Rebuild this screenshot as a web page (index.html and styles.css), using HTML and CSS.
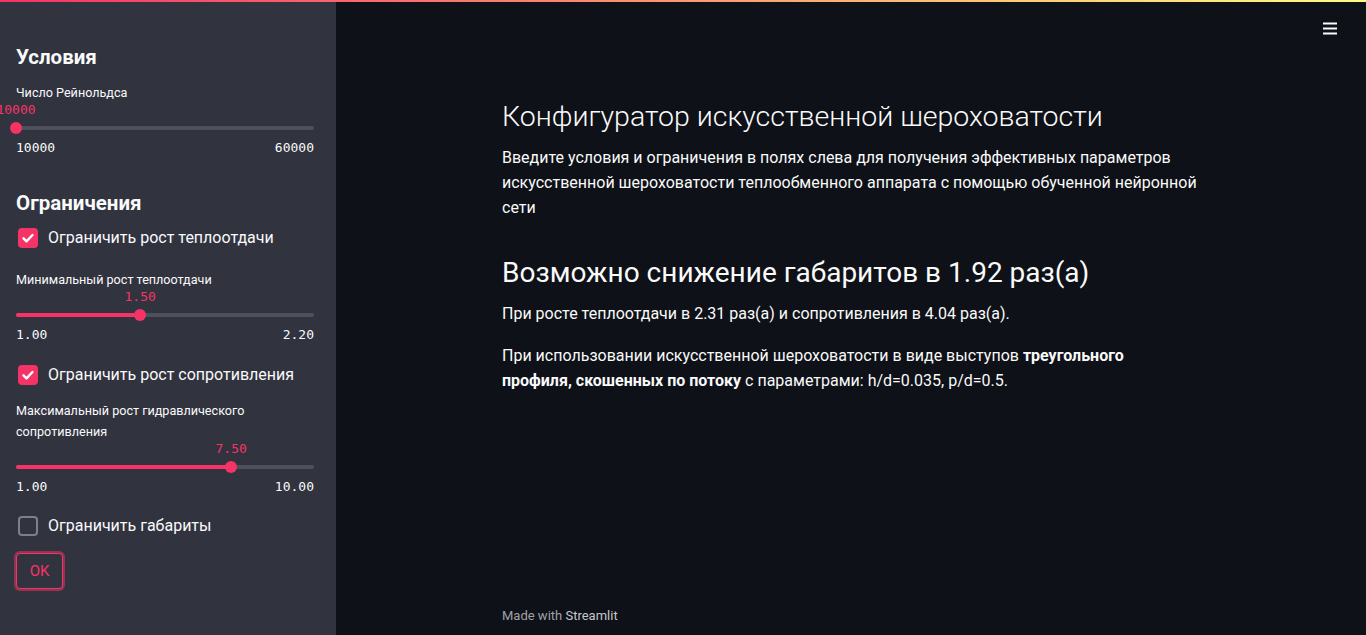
FILE: index.html
```html
<!DOCTYPE html>
<html lang="ru">
<head>
<meta charset="utf-8">
<title>Конфигуратор</title>
<link rel="stylesheet" href="styles.css">
</head>
<body>
<div class="decoration"></div>
<div class="app">
  <aside class="sidebar">
    <h2 class="side-h">Условия</h2>
    <div class="slider s1">
      <div class="s-label">Число Рейнольдса</div>
      <div class="s-body">
        <div class="s-track"><div class="s-fill" style="width:0%"></div>
          <div class="s-thumb" style="left:0%"><span class="s-value">10000</span></div>
        </div>
      </div>
      <div class="s-minmax"><span>10000</span><span>60000</span></div>
    </div>

    <h2 class="side-h side-h2">Ограничения</h2>
    <label class="check c1"><span class="box on"><svg viewBox="0 0 20 20" width="20" height="20"><path d="M5.5 10.3l3 3 6-6.3" fill="none" stroke="#fff" stroke-width="2.4" stroke-linecap="round" stroke-linejoin="round"/></svg></span>Ограничить рост теплоотдачи</label>
    <div class="slider s2">
      <div class="s-label">Минимальный рост теплоотдачи</div>
      <div class="s-body">
        <div class="s-track"><div class="s-fill" style="width:41.67%"></div>
          <div class="s-thumb" style="left:41.67%"><span class="s-value">1.50</span></div>
        </div>
      </div>
      <div class="s-minmax"><span>1.00</span><span>2.20</span></div>
    </div>

    <label class="check c2"><span class="box on"><svg viewBox="0 0 20 20" width="20" height="20"><path d="M5.5 10.3l3 3 6-6.3" fill="none" stroke="#fff" stroke-width="2.4" stroke-linecap="round" stroke-linejoin="round"/></svg></span>Ограничить рост сопротивления</label>
    <div class="slider s3">
      <div class="s-label">Максимальный рост гидравлического сопротивления</div>
      <div class="s-body">
        <div class="s-track"><div class="s-fill" style="width:72.22%"></div>
          <div class="s-thumb" style="left:72.22%"><span class="s-value">7.50</span></div>
        </div>
      </div>
      <div class="s-minmax"><span>1.00</span><span>10.00</span></div>
    </div>

    <label class="check c3"><span class="box"></span>Ограничить габариты</label>
    <button class="btn">OK</button>
  </aside>

  <main class="main">
    <button class="menu" aria-label="menu"><svg width="16" height="14" viewBox="0 0 16 14"><rect x="1" y="1.5" width="14" height="2" fill="#fafafa"/><rect x="1" y="6.5" width="14" height="2" fill="#fafafa"/><rect x="1" y="11.5" width="14" height="2" fill="#fafafa"/></svg></button>
    <div class="block">
      <h1 class="title">Конфигуратор искусственной шероховатости</h1>
      <p class="text">Введите условия и ограничения в полях слева для получения эффективных параметров искусственной шероховатости теплообменного аппарата с помощью обученной нейронной сети</p>
      <h2 class="result">Возможно снижение габаритов в 1.92 раз(а)</h2>
      <p class="text">При росте теплоотдачи в 2.31 раз(а) и сопротивления в 4.04 раз(а).</p>
      <p class="text">При использовании искусственной шероховатости в виде выступов <b>треугольного<br>профиля, скошенных по потоку</b> с параметрами: h/d=0.035, p/d=0.5.</p>
    </div>
    <footer class="footer">Made with <span>Streamlit</span></footer>
  </main>
</div>
</body>
</html>
```

FILE: styles.css
```css
* { box-sizing: border-box; }
html, body { margin: 0; padding: 0; height: 100%; }
body {
  background: #0e1117;
  color: #fafafa;
  font-family: Roboto, "Noto Sans", sans-serif;
  overflow: hidden;
}
.decoration {
  position: fixed;
  top: 0; left: 0; right: 0;
  height: 2px;
  background: linear-gradient(90deg, #f63366, #fffd80);
  z-index: 5;
}
.app { display: flex; height: 635px; }
.sidebar {
  width: 336px;
  flex: none;
  background: #31333f;
  padding: 44px 22px 0 16px;
}
.side-h {
  margin: 0;
  font-size: 20.5px;
  font-weight: 700;
  line-height: 26px;
  color: #fafafa;
}
.side-h2 { margin-top: 34px; }
.s-label {
  font-size: 12.6px;
  line-height: 21px;
  color: #fafafa;
}
.s-body { height: 27px; padding-top: 23px; }
.s-track {
  position: relative;
  height: 4px;
  border-radius: 2px;
  background: #4e505c;
}
.s-fill { height: 4px; border-radius: 2px; background: #f63366; }
.s-thumb {
  position: absolute;
  top: -4px;
  width: 12px; height: 12px;
  margin-left: -6px;
  border-radius: 50%;
  background: #f63366;
}
.s-value {
  position: absolute;
  bottom: 16px;
  left: 50%;
  transform: translateX(-50%);
  font-family: "DejaVu Sans Mono", "Liberation Mono", monospace;
  font-size: 13px;
  line-height: 16px;
  color: #f63366;
  white-space: nowrap;
}
.s-minmax {
  display: flex;
  justify-content: space-between;
  font-family: "DejaVu Sans Mono", "Liberation Mono", monospace;
  font-size: 13px;
  line-height: 16px;
  color: #fafafa;
  margin-top: 10px;
}
.s1 { margin-top: 12px; }
.s2 { margin-top: 19px; }
.s3 { margin-top: 13px; }
.check {
  display: flex;
  align-items: center;
  gap: 10px;
  font-size: 16px;
  line-height: 24px;
  padding-left: 2px;
  color: #fafafa;
}
.c1 { margin-top: 10px; }
.c2 { margin-top: 20px; }
.c3 { margin-top: 19px; }
.box {
  width: 20px; height: 20px;
  border-radius: 4px;
  border: 2px solid #7d7f89;
  display: flex;
  flex: none;
}
.box.on { background: #f63366; border: 0; }
.btn {
  display: block;
  margin-top: 15px;
  width: 47px; height: 36px;
  border: 1px solid #f63366;
  border-radius: 4px;
  background: #31333f;
  color: #f63366;
  font-family: Roboto, "Noto Sans", sans-serif;
  font-size: 15px;
  box-shadow: 0 0 0 2px rgba(246, 51, 102, 0.5);
  padding: 0;
}
.main {
  flex: 1;
  position: relative;
  display: flex;
  flex-direction: column;
  align-items: center;
}
.menu {
  position: absolute;
  top: 21px; right: 28px;
  background: none; border: 0; padding: 0;
  width: 16px; height: 16px;
}
.block {
  width: 730px;
  padding: 96px 16px 0 16px;
  flex: 1;
}
.title {
  margin: 0;
  font-size: 28.5px;
  font-weight: 300;
  line-height: 42px;
}
.text {
  margin: 0 0 17px 0;
  font-size: 16px;
  line-height: 25px;
}
.title + .text { margin-top: 7px; }
.text b { font-weight: 700; }
.result {
  margin: 33px 0 8px 0;
  font-size: 28px;
  font-weight: 400;
  line-height: 40px;
}
.footer {
  width: 730px;
  padding: 0 16px 10px;
  font-size: 13px;
  color: #a0a2a8;
  line-height: 18px;
}
.footer span { color: #c5c7cc; }
```
